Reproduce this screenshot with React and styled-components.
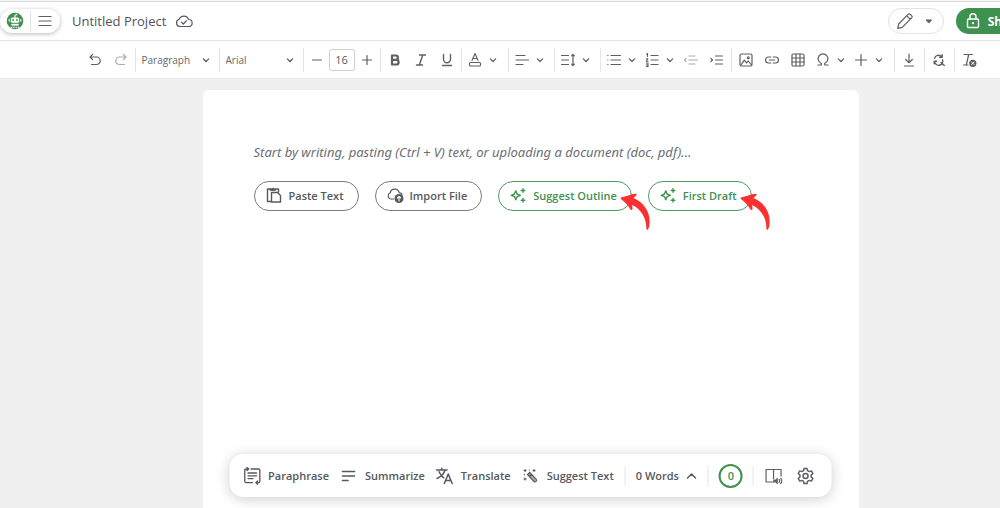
import React from 'react'
import styled, { createGlobalStyle, ThemeProvider } from 'styled-components'

const theme = {
  green: '#3f9150',
  outline: '#4f9a63',
  text: '#55585c',
  icon: '#5c5f63',
  line: '#e4e4e4',
  canvas: '#f0f0f0',
  red: '#fb3131',
}

const GlobalStyle = createGlobalStyle`
  * {
    box-sizing: border-box;
  }
  body {
    margin: 0;
    overflow: hidden;
    font-family: 'Open Sans', sans-serif;
  }
  button, select, input {
    font-family: inherit;
  }
`

const Page = styled.div`
  position: relative;
  display: flex;
  flex-direction: column;
  min-width: 1061px;
  height: 100vh;
  border-top: 1px solid #f6f6f6;
  background: ${props => props.theme.canvas};
  color: ${props => props.theme.text};
`

const Header = styled.header`
  display: flex;
  flex: none;
  align-items: center;
  height: 40px;
  padding-right: 25px;
  background: #fff;
  border-top: 1px solid #d9d9d9;
  border-bottom: 1px solid ${props => props.theme.line};
`

const Icon = styled.svg.attrs(props => ({
  viewBox: props.viewBox || '0 0 18 18',
  'aria-hidden': true,
}))`
  display: block;
  flex: none;
  width: ${props => props.$size || 18}px;
  height: ${props => props.$size || 18}px;
  fill: none;
  stroke: currentColor;
  stroke-width: ${props => props.$weight || 1.2};
  stroke-linecap: round;
  stroke-linejoin: round;
`

const PlainButton = styled.button`
  display: flex;
  align-items: center;
  justify-content: center;
  padding: 0;
  border: 0;
  background: none;
  color: ${props => props.theme.icon};
`

const MenuPill = styled.div`
  display: flex;
  align-items: center;
  width: 60px;
  height: 24px;
  border-radius: 12px;
  background: #fff;
  box-shadow: 0 1px 4px rgba(0, 0, 0, 0.28);
`

const MenuPart = styled(PlainButton)`
  flex: 1;
  height: 20px;
  & + & {
    border-left: 1px solid ${props => props.theme.line};
  }
`

const Title = styled.h1`
  margin: 0 9px 0 12px;
  font-size: 13px;
  line-height: 20px;
  font-weight: 400;
  color: #505357;
`

const HeaderActions = styled.div`
  display: flex;
  gap: 12px;
  margin-left: auto;
`

const ModeButton = styled(PlainButton)`
  gap: 8px;
  width: 56px;
  height: 26px;
  border: 1px solid #e2e2e2;
  border-radius: 13px;
`

const ShareButton = styled(PlainButton)`
  gap: 6px;
  height: 26px;
  padding: 0 14px 0 8px;
  border-radius: 13px;
  background: ${props => props.theme.green};
  color: #fff;
  font-size: 12px;
  font-weight: 700;
`

const Toolbar = styled.div`
  display: flex;
  flex: none;
  align-items: center;
  justify-content: center;
  height: 38px;
  padding-left: 2px;
  background: #fff;
  border-bottom: 1px solid #e9e9e9;
`

const Group = styled.div`
  display: flex;
  align-items: center;
  height: 24px;
  padding: 0 ${props => props.$end || 1}px 0 1px;
  & + & {
    border-left: 1px solid ${props => props.theme.line};
  }
`

const Tool = styled(PlainButton)`
  width: ${props => (props.$narrow ? 24 : 26)}px;
  height: 24px;
  color: ${props => (props.disabled ? '#a9abad' : props.theme.icon)};
`

const DropTool = styled(PlainButton)`
  gap: 4px;
  width: 38px;
  height: 24px;
`

const PickerWrap = styled.label`
  display: flex;
  align-items: center;
  width: 81px;
  padding: 0 7px 0 5px;
`

const Picker = styled.select`
  flex: 1;
  min-width: 0;
  height: 20px;
  padding: 0;
  border: 0;
  appearance: none;
  background: none;
  color: #66696d;
  font-size: 10px;
`

const SizeInput = styled.input`
  width: 26px;
  height: 22px;
  padding: 0;
  border: 1px solid #cfcfcf;
  border-radius: 3px;
  text-align: center;
  color: ${props => props.theme.text};
  font-size: 11px;
`

const Desk = styled.main`
  display: flex;
  flex: 1;
  justify-content: center;
  padding-top: 11px;
`

const Paper = styled.article`
  width: 656px;
  padding: 52px 51px;
  border-radius: 6px 6px 0 0;
  background: #fff;
`

const Hint = styled.p`
  margin: 0 0 19px;
  font-family: 'Noto Sans', 'Open Sans', sans-serif;
  font-size: 13px;
  line-height: 20px;
  font-style: italic;
  color: #6b6e72;
`

const Starters = styled.div`
  display: flex;
  gap: 16px;
`

const Starter = styled.button`
  position: relative;
  display: flex;
  align-items: center;
  gap: 6px;
  height: 30px;
  padding: 0 14px 2px 10px;
  border: 1px solid ${props => (props.$green ? props.theme.outline : '#77797c')};
  border-radius: 15px;
  background: #fff;
  color: ${props => (props.$green ? props.theme.green : props.theme.text)};
  font-size: 11px;
  font-weight: 600;
`

const ArrowMark = styled.svg`
  position: absolute;
  top: 11px;
  right: -20px;
  width: 31px;
  height: 38px;
  fill: ${props => props.theme.red};
`

const AssistBar = styled.div`
  position: absolute;
  bottom: 11px;
  left: 50%;
  transform: translateX(-50%);
  display: flex;
  align-items: center;
  height: 43px;
  padding: 0 17px 0 14px;
  border-radius: 14px;
  background: #fff;
  box-shadow: 0 2px 14px rgba(0, 0, 0, 0.2);
`

const Assist = styled(PlainButton)`
  gap: 7px;
  margin-right: 11px;
  color: ${props => props.theme.text};
  font-size: 11px;
  font-weight: 600;
  white-space: nowrap;
`

const BarSection = styled.div`
  display: flex;
  align-items: center;
  gap: 14px;
  height: 20px;
  padding: 0 10px;
  border-left: 1px solid ${props => props.theme.line};
  &:last-child {
    padding: 0 0 0 11px;
  }
`

const Count = styled(Assist)`
  margin: 0;
`

const Score = styled.button`
  width: 24px;
  height: 24px;
  padding: 0;
  border: 2px solid ${props => props.theme.green};
  border-radius: 50%;
  background: #fff;
  color: ${props => props.theme.green};
  font-size: 11px;
  font-weight: 600;
`

const Chevron = () => (
  <Icon viewBox="0 0 10 10" $size={10}>
    <path d="M2.3 3.8 5 6.5l2.7-2.7" />
  </Icon>
)

const Sparkles = () => (
  <Icon $weight={1.4}>
    <path d="M6.8 4.8 8.1 8 11.3 9.3 8.1 10.6 6.8 13.8 5.5 10.6 2.3 9.3 5.5 8z" />
    <path d="M14 2.7v3.6M12.2 4.5h3.6M14 12.5v3.6M12.2 14.3h3.6" />
  </Icon>
)

const Arrow = () => (
  <ArrowMark viewBox="0 0 31 38" aria-hidden="true">
    <path d="M1 4.5C6 3.5 11 1 15.5.7c1.3 0 1.5 1 .7 1.8L13.500 5C24.500 9.500 32 21 29 34.500L27.200 37.300 26.400 36C26.500 25 21 16 12.200 12l.3 4c0 1.300-1.200 1.500-2 .4C7.500 12 5 9 1.500 6.500.5 5.800.2 4.800 1 4.500z" />
  </ArrowMark>
)

const App = () => (
  <ThemeProvider theme={theme}>
    <GlobalStyle />
    <Page>
      <Header>
        <MenuPill>
          <MenuPart aria-label="Home">
            <Icon>
              <circle cx="9" cy="9" r="8.3" fill={theme.green} stroke="none" />
              <path d="M9 5.5V3.4l1.800-1" stroke="#fff" strokeWidth="1.1" />
              <rect x="4.8" y="5.4" width="8.4" height="5.4" rx="1.6" fill="#fff" stroke="none" />
              <path d="M3.2 7.3v2M14.8 7.3v2" stroke="#fff" strokeWidth="1" />
              <circle cx="7.1" cy="8" r=".9" fill={theme.green} stroke="none" />
              <circle cx="10.9" cy="8" r=".9" fill={theme.green} stroke="none" />
              <path d="M5.3 11.8h7.400v1.800H5.300z" fill="#fff" stroke="none" />
              <path d="M5 15.3h8" stroke="#fff" strokeWidth="1" strokeDasharray="1 1.5" />
            </Icon>
          </MenuPart>
          <MenuPart aria-label="Menu">
            <Icon>
              <path d="M3 4.5h12M3 9h12M3 13.5h12" />
            </Icon>
          </MenuPart>
        </MenuPill>
        <Title>Untitled Project</Title>
        <Icon>
          <path d="M4.7 14.5A3.7 3.7 0 0 1 4.2 7.3 5 5 0 0 1 13.6 7.5 3.5 3.5 0 0 1 13.7 14.5z" />
          <path d="m6.5 10.2 1.8 1.8 3.2-3.4" />
        </Icon>
        <HeaderActions>
          <ModeButton aria-label="Editing mode">
            <Icon>
              <path d="m1.7 16.3 1-4.3L12.3 2.2q.9-.8 1.8 0l1.7 1.7q.8.9 0 1.8L6.2 15.3zM10.8 3.8l3.5 3.5" />
            </Icon>
            <Icon viewBox="0 0 14 14" $size={14}>
              <path d="M4.5 6h5L7 8.8z" fill="currentColor" strokeWidth="1" />
            </Icon>
          </ModeButton>
          <ShareButton>
            <Icon $weight={1.4}>
              <rect x="3.5" y="7" width="11" height="8.5" rx="1" />
              <path d="M6 7V4.8a3 3 0 0 1 6 0V7" />
              <circle cx="9" cy="11.2" r="1.1" fill="currentColor" stroke="none" />
            </Icon>
            Share
          </ShareButton>
        </HeaderActions>
      </Header>

      <Toolbar role="toolbar" aria-label="Formatting">
        <Group>
          <Tool aria-label="Undo">
            <Icon>
              <path d="M6.5 3.5 4 6l2.5 2.5M4.2 6h6.3a3.7 3.7 0 0 1 0 7.5H5.5" />
            </Icon>
          </Tool>
          <Tool aria-label="Redo" disabled>
            <Icon>
              <path d="M11.5 3.5 14 6l-2.5 2.5M13.8 6H7.5a3.7 3.7 0 0 0 0 7.5h5" />
            </Icon>
          </Tool>
        </Group>
        <Group>
          <PickerWrap>
            <Picker aria-label="Text style">
              <option>Paragraph</option>
            </Picker>
            <Chevron />
          </PickerWrap>
        </Group>
        <Group>
          <PickerWrap>
            <Picker aria-label="Font">
              <option>Arial</option>
            </Picker>
            <Chevron />
          </PickerWrap>
        </Group>
        <Group>
          <Tool aria-label="Decrease size" $narrow>
            <Icon>
              <path d="M4.5 9h9" />
            </Icon>
          </Tool>
          <SizeInput aria-label="Font size" defaultValue="16" />
          <Tool aria-label="Increase size" $narrow>
            <Icon>
              <path d="M4.5 9h9M9 4.5v9" />
            </Icon>
          </Tool>
        </Group>
        <Group>
          <Tool aria-label="Bold">
            <Icon $weight={2.2}>
              <path d="M6 4.5h3.7a2.2 2.2 0 0 1 0 4.4H6zM6 8.9h4.3a2.3 2.3 0 0 1 0 4.6H6z" />
            </Icon>
          </Tool>
          <Tool aria-label="Italic">
            <Icon $weight={1.4}>
              <path d="M7.5 4h6M4.5 14h6M10.8 4 7.3 14" />
            </Icon>
          </Tool>
          <Tool aria-label="Underline">
            <Icon $weight={1.4}>
              <path d="M5.5 3.5v4.7a3.5 3.5 0 0 0 7 0V3.500M4.500 14.500h9" />
            </Icon>
          </Tool>
        </Group>
        <Group $end={7}>
          <DropTool aria-label="Text color">
            <Icon $weight={1.1}>
              <path d="M6 9.5 9 2.5l3 7M7 7.5h4" />
              <rect x="3.5" y="11.5" width="11" height="3.5" rx="1" />
            </Icon>
            <Chevron />
          </DropTool>
        </Group>
        <Group $end={6}>
          <DropTool aria-label="Align">
            <Icon>
              <path d="M3 4.5h9M3 9h12.5M3 13.5h7" />
            </Icon>
            <Chevron />
          </DropTool>
        </Group>
        <Group $end={6}>
          <DropTool aria-label="Line height">
            <Icon>
              <path d="M2.5 4.5h7M2.5 9h7M2.5 13.5h7M14 3.5v11M12.6 4.8 14 3.3 15.4 4.8M12.6 13.2l1.4 1.5 1.4-1.5" />
            </Icon>
            <Chevron />
          </DropTool>
        </Group>
        <Group>
          <DropTool aria-label="Bulleted list">
            <Icon>
              <path d="M6 4.5h9.5M6 9h9.5M6 13.5h9.5M2.8 4.5h.2M2.8 9h.2M2.8 13.5h.2" />
            </Icon>
            <Chevron />
          </DropTool>
          <DropTool aria-label="Numbered list">
            <Icon>
              <path d="M8 4.5h7M8 9h7M8 13.5h7" />
              <path d="M3.5 3.2 4.5 2.5v3M3.3 7.8h1.6L3.3 10.2h1.8M3.3 12h1.7v1.7H3.7M5 13.7v1.7H3.3" strokeWidth="1.1" />
            </Icon>
            <Chevron />
          </DropTool>
          <Tool aria-label="Outdent" disabled>
            <Icon>
              <path d="M7 5h6M7 9h8.5M7 13h6M4 7.5 2.5 9 4 10.5" />
            </Icon>
          </Tool>
          <Tool aria-label="Indent">
            <Icon>
              <path d="M7.5 5h7M7.5 9h7M7.5 13h7M3 7.5 4.5 9 3 10.5" />
            </Icon>
          </Tool>
        </Group>
        <Group $end={7}>
          <Tool aria-label="Insert image">
            <Icon>
              <rect x="3" y="3" width="12" height="12" rx="1.5" />
              <path d="m4 14 3.3-4.8 2.2 2.6 1.8-1.8L14.500 14" />
              <circle cx="11.3" cy="6.7" r=".9" />
            </Icon>
          </Tool>
          <Tool aria-label="Insert link">
            <Icon>
              <path d="M7.8 6H5.500a3 3 0 0 0 0 6h2.300M10.200 6h2.300a3 3 0 0 1 0 6h-2.300M6.300 9h5.400" />
            </Icon>
          </Tool>
          <Tool aria-label="Insert table">
            <Icon>
              <rect x="3" y="3" width="12" height="12" rx="1.2" />
              <path d="M3 7h12M3 11h12M7 3v12M11 3v12" />
            </Icon>
          </Tool>
          <DropTool aria-label="Insert symbol">
            <Icon>
              <path d="M3.8 14h3.500v-1.600A4.900 4.900 0 1 1 10.700 12.400V14h3.500" />
            </Icon>
            <Chevron />
          </DropTool>
          <DropTool aria-label="Insert more">
            <Icon>
              <path d="M3.5 9h11M9 3.5v11" />
            </Icon>
            <Chevron />
          </DropTool>
        </Group>
        <Group $end={2}>
          <Tool aria-label="Download">
            <Icon>
              <path d="M9 3v8.5M5.7 8.5 9 11.7l3.3-3.2M4.5 15h9" />
            </Icon>
          </Tool>
        </Group>
        <Group $end={2}>
          <Tool aria-label="Find and replace">
            <Icon $weight={1.4}>
              <path d="M4.5 7.3A4 4 0 0 1 11.5 5.7M12.2 3.7v2.5H9.7M4.2 12.7V10.2h2.5M12.5 8.8A4 4 0 0 1 5 11.7M11 11.5l3.3 3" />
            </Icon>
          </Tool>
        </Group>
        <Group>
          <Tool aria-label="Clear formatting">
            <Icon>
              <path d="M4 3.5h8.5M8.7 3.5 6.3 14M3.5 14H8" />
              <circle cx="12.8" cy="12.3" r="3.6" fill="currentColor" stroke="none" />
              <path d="m11.6 11.1 2.4 2.4M14 11.1l-2.4 2.4" stroke="#fff" strokeWidth="1" />
            </Icon>
          </Tool>
        </Group>
      </Toolbar>

      <Desk>
        <Paper>
          <Hint>
            Start by writing, pasting (Ctrl + V) text, or uploading a document
            (doc, pdf)...
          </Hint>
          <Starters>
            <Starter>
              <Icon $weight={1.4}>
                <path d="M5.5 3H2.500v12.500H6M11 3h2.500v3" />
                <path d="M5.5 2.800h1.400a1.200 1.200 0 0 1 2.200 0H10.500v1.700H5.500z" fill="currentColor" strokeWidth=".8" />
                <path d="M6.5 6.500h6l3 3v6.500h-9z" />
              </Icon>
              Paste Text
            </Starter>
            <Starter>
              <Icon>
                <path d="M7.5 13H4.500A3.300 3.300 0 0 1 4.200 6.800 4.600 4.600 0 0 1 13.200 6.700Q15.500 7 16 8.500" />
                <circle cx="13" cy="12.5" r="4.5" fill="currentColor" stroke="none" />
                <path d="M13 15v-4.500M11.300 12 13 10.300l1.700 1.700" stroke="#fff" strokeWidth="1.1" />
              </Icon>
              Import File
            </Starter>
            <Starter $green>
              <Sparkles />
              Suggest Outline
              <Arrow />
            </Starter>
            <Starter $green>
              <Sparkles />
              First Draft
              <Arrow />
            </Starter>
          </Starters>
        </Paper>
      </Desk>

      <AssistBar>
        <Assist>
          <Icon $weight={1.3}>
            <path d="M4.5 2H2.500Q1.200 2 1.200 3.300v11q0 1.300 1.300 1.300H9M7.500 2h7.500q1.300 0 1.300 1.300V14q0 1.600-1.300 1.600h-2.500M3.500.5 5.200 2 3.500 3.500M14 14l-1.700 1.600L14 17.200" />
            <path d="M4.500 6h8.500M4.500 8.800h8.500M4.500 11.600h5" />
          </Icon>
          Paraphrase
        </Assist>
        <Assist>
          <Icon $weight={1.6}>
            <path d="M3 4.5h12M3 9h12M3 13.5h5.5" />
          </Icon>
          Summarize
        </Assist>
        <Assist>
          <Icon $weight={1.5}>
            <path d="M1 3h10.500M6.200 1.200V3M9.500 3Q8 8.500 1.500 11.500M3.500 4.800Q5 8.500 8.200 10.800M8.800 16.500l3.900-9.500 3.900 9.500M10.200 13.500h5" />
          </Icon>
          Translate
        </Assist>
        <Assist>
          <Icon>
            <path d="m6 7.500 2.200-2 6.500 6.800q.8 1-.2 2t-2 .2zM7.800 9.400l2.200-2" fill="currentColor" fillOpacity=".45" />
            <path d="M3.500 2.500v2M2.500 3.500h2M12.500 2.500v2M11.500 3.500h2M3.500 11v2M2.500 12h2M7.800 3h.1M2.800 7.700h.1" />
          </Icon>
          Suggest Text
        </Assist>
        <BarSection>
          <Count>
            0 Words
            <Icon viewBox="0 0 12 12" $size={12} $weight={1.5}>
              <path d="M2 8l4-4 4 4" />
            </Icon>
          </Count>
        </BarSection>
        <BarSection>
          <Score>0</Score>
        </BarSection>
        <BarSection>
          <PlainButton aria-label="Read aloud">
            <Icon>
              <path d="M9 15H1.500V2.500h15V9M9 2.500v9.500" />
              <path d="M9.500 13h1.300l2-1.800v5.600l-2-1.800H9.500z" fill="currentColor" strokeWidth=".8" />
              <path d="M14.500 12.500q1.200 1.500 0 3M16.200 11.300q2 2.700 0 5.400" />
            </Icon>
          </PlainButton>
          <PlainButton aria-label="Settings">
            <Icon $weight={1.5}>
              <path d="M7.500 1.500h3l.5 2.200 1.600.9 2.200-.7 1.500 2.600-1.700 1.600v1.800l1.700 1.600-1.500 2.600-2.200-.7-1.600.9-.5 2.200h-3L7 14.300l-1.600-.9-2.200.7-1.500-2.600 1.700-1.600V8.100L1.700 6.500l1.500-2.600 2.200.7L7 3.700z" />
              <circle cx="9" cy="9" r="2.5" />
            </Icon>
          </PlainButton>
        </BarSection>
      </AssistBar>
    </Page>
  </ThemeProvider>
)

export default App
